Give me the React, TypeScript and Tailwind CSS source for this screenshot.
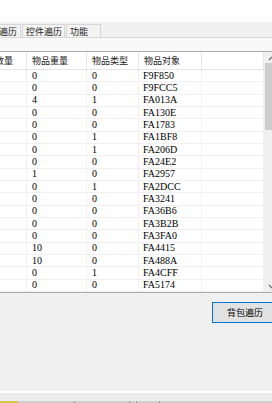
import type { ReactNode } from 'react'

const ROWS: [string, string, string][] = [
  ['0', '0', 'F9F850'],
  ['0', '0', 'F9FCC5'],
  ['4', '1', 'FA013A'],
  ['0', '0', 'FA130E'],
  ['0', '0', 'FA1783'],
  ['0', '1', 'FA1BF8'],
  ['0', '1', 'FA206D'],
  ['0', '0', 'FA24E2'],
  ['1', '0', 'FA2957'],
  ['0', '1', 'FA2DCC'],
  ['0', '0', 'FA3241'],
  ['0', '0', 'FA36B6'],
  ['0', '0', 'FA3B2B'],
  ['0', '0', 'FA3FA0'],
  ['10', '0', 'FA4415'],
  ['10', '0', 'FA488A'],
  ['0', '1', 'FA4CFF'],
  ['0', '0', 'FA5174'],
]

const CJK = { fontFamily: '"Noto Sans CJK SC", "Noto Sans", sans-serif' }
const CELL = { fontFamily: '"Liberation Serif", "DejaVu Serif", serif' }

// widths of the list columns, the first one is scrolled off to the left
const COLS = ['w-[27px]', 'w-[60px]', 'w-[52px]', 'w-[63px]', 'flex-1']

function Tab({ children, className = '' }: { children: ReactNode; className?: string }) {
  return (
    <div
      className={`h-[13px] flex items-center border border-b-0 border-[#d6d6d6] bg-[#f3f3f3] text-[9px] leading-none text-[#1a1a1a] ${className}`}
      style={CJK}
    >
      {children}
    </div>
  )
}

function Arrow({ up }: { up?: boolean }) {
  return (
    <svg width="9" height="6" viewBox="0 0 9 6" className="text-[#606060]">
      <polyline
        points={up ? '1,5 4.5,1.5 8,5' : '1,1 4.5,4.5 8,1'}
        fill="none"
        stroke="currentColor"
        strokeWidth="1.2"
      />
    </svg>
  )
}

export default function App() {
  return (
    <div className="w-[272px] h-[403px] overflow-hidden bg-[#f0f0f0] flex flex-col">
      <div className="h-[22px] shrink-0 bg-white" />

      {/* tab strip */}
      <div className="h-[16px] shrink-0 flex items-end gap-[1px] border-b border-[#d9d9d9] bg-[#f0f0f0]">
        <Tab className="w-[21px] justify-end border-l-0 overflow-hidden">
          <span className="whitespace-nowrap pr-[3px]">物品遍历</span>
        </Tab>
        <Tab className="w-[43px] pl-[3px]">控件遍历</Tab>
        <Tab className="w-[35px] pl-[3px]">功能</Tab>
      </div>
      <div className="h-[13px] shrink-0 bg-[#f9f9f9]" />

      {/* list view */}
      <div className="w-[281px] h-[242px] shrink-0 flex border-y border-[#a9a9a9] bg-white">
        <div className="flex-1 flex flex-col min-w-0">
          <div className="h-[18px] flex border-b border-[#e5e5e5]" style={CJK}>
            {['数量', '物品重量', '物品类型', '物品对象', ''].map((h, i) => (
              <div
                key={i}
                className={`${COLS[i]} h-full flex items-center overflow-hidden border-r border-[#e5e5e5] text-[9px] leading-none text-[#1a1a1a] ${i === 0 ? 'justify-end pr-[13px]' : 'pl-[5px]'}`}
              >
                <span className="whitespace-nowrap">{h}</span>
              </div>
            ))}
          </div>
          {ROWS.map(([w, t, o]) => (
            <div key={o} className="h-[12.33px] flex border-b border-[#f0f0f0]" style={CELL}>
              {['', w, t, o, ''].map((v, i) => (
                <div
                  key={i}
                  className={`${COLS[i]} h-full flex items-center ${i === 3 ? 'pl-[4px]' : 'pl-[5px]'} border-r border-[#f0f0f0] text-[10px] leading-none text-black`}
                >
                  {v}
                </div>
              ))}
            </div>
          ))}
        </div>

        {/* vertical scrollbar */}
        <div className="w-[17px] flex flex-col bg-[#f0f0f0]">
          <div className="h-[11px] flex items-center justify-center">
            <Arrow up />
          </div>
          <div className="h-[67px] mx-[1px] bg-[#cdcdcd]" />
          <div className="flex-1" />
          <div className="h-[11px] flex items-center justify-center">
            <Arrow />
          </div>
        </div>
      </div>

      <div className="shrink-0 flex pt-[9px] pl-[212px]">
        <button
          className="w-[66px] h-[21px] shrink-0 flex items-center justify-center border border-[#0078d7] bg-[#e1e1e1] text-[9px] leading-none text-black"
          style={CJK}
        >
          背包遍历
        </button>
      </div>

      <div className="flex-1" />
      <div className="h-[2px] shrink-0 bg-white" />
      <div className="h-[8px] shrink-0 bg-[#ececec]" />
      <div className="h-[2px] shrink-0 flex bg-[#cfcfcf]">
        <div className="w-[18px] bg-[#d8c84a]" />
        <div className="w-[57px] border-r border-[#9a9a9a]" />
        <div className="w-[55px] border-r border-[#9a9a9a]" />
        <div className="w-[7px] border-r border-[#9a9a9a]" />
        <div className="w-[23px] border-r border-[#9a9a9a]" />
      </div>
    </div>
  )
}
